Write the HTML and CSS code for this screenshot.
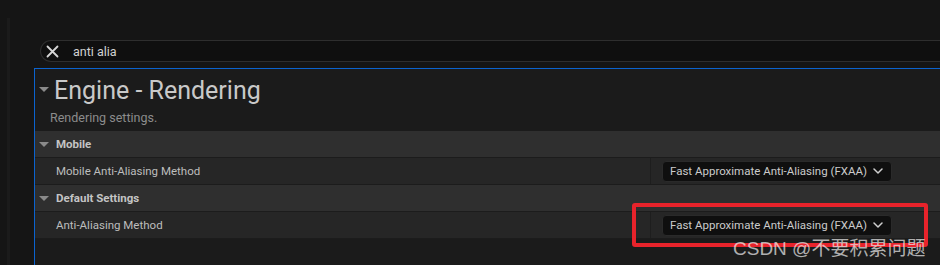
FILE: index.html
```html
<!DOCTYPE html>
<html>
<head>
<meta charset="utf-8">
<link rel="stylesheet" href="styles.css">
</head>
<body>
<div class="app">
  <div class="gutter"></div>
  <div class="main">
    <div class="search">
      <svg class="clear" width="13" height="13" viewBox="0 0 13 13"><path d="M1.5 1.5 L11.5 11.5 M11.5 1.5 L1.5 11.5" stroke="#d6d6d6" stroke-width="1.8" stroke-linecap="round" fill="none"/></svg>
      <span class="query">anti alia</span>
    </div>
    <div class="panel">
      <div class="title-row">
        <span class="tri big"></span>
        <span class="title">Engine - Rendering</span>
      </div>
      <div class="desc">Rendering settings.</div>
      <div class="rows">
        <div class="cat"><span class="tri"></span><span class="cat-name">Mobile</span></div>
        <div class="prop">
          <div class="prop-name">Mobile Anti-Aliasing Method</div>
          <div class="prop-value">
            <div class="combo"><span>Fast Approximate Anti-Aliasing (FXAA)</span>
              <svg width="10" height="6" viewBox="0 0 10 6"><path d="M1 1 L5 5 L9 1" stroke="#cfcfcf" stroke-width="1.5" fill="none" stroke-linecap="round" stroke-linejoin="round"/></svg>
            </div>
          </div>
        </div>
        <div class="cat"><span class="tri"></span><span class="cat-name">Default Settings</span></div>
        <div class="prop">
          <div class="prop-name">Anti-Aliasing Method</div>
          <div class="prop-value">
            <div class="combo"><span>Fast Approximate Anti-Aliasing (FXAA)</span>
              <svg width="10" height="6" viewBox="0 0 10 6"><path d="M1 1 L5 5 L9 1" stroke="#cfcfcf" stroke-width="1.5" fill="none" stroke-linecap="round" stroke-linejoin="round"/></svg>
            </div>
          </div>
        </div>
      </div>
    </div>
  </div>
</div>
<div class="highlight"></div>
<div class="watermark">CSDN @不要积累问题</div>
</body>
</html>
```

FILE: styles.css
```css
html, body {
  margin: 0;
  padding: 0;
  width: 940px;
  height: 265px;
  overflow: hidden;
  background: #151515;
  font-family: Roboto, "Liberation Sans", sans-serif;
}
.app {
  display: flex;
  height: 265px;
  padding-left: 7px;
  position: relative;
}
.gutter {
  width: 3px;
  margin-top: 18px;
  background: #1b1b1b;
  flex: none;
}
.main {
  margin-left: 24px;
  padding-top: 40px;
  flex: 1;
  display: flex;
  flex-direction: column;
  min-width: 0;
}
.search {
  margin-left: 6px;
  height: 20px;
  border: 1px solid #2e2e2e;
  border-right: none;
  border-radius: 11px 0 0 11px;
  background: #0f0f0f;
  display: flex;
  align-items: center;
  padding-left: 5px;
}
.clear { flex: none; }
.query {
  margin-left: 14px;
  font-size: 12.5px;
  color: #d2d2d2;
}
.panel {
  margin-top: 6px;
  flex: 1;
  border-top: 1px solid #0b63cf;
  border-left: 1px solid #0b63cf;
  background: #1b1b1b;
}
.title-row {
  display: flex;
  align-items: center;
  height: 40px;
  padding-left: 4px;
}
.tri {
  width: 0;
  height: 0;
  border-left: 5px solid transparent;
  border-right: 5px solid transparent;
  border-top: 5px solid #8a8a8a;
  flex: none;
}
.title {
  margin-left: 5px;
  font-size: 25px;
  color: #c9c9c9;
  margin-top: 2px;
}
.desc {
  height: 22px;
  padding-left: 15px;
  font-size: 12.5px;
  color: #8c8c8c;
  line-height: 18px;
}
.rows {
  display: flex;
  flex-direction: column;
}
.cat {
  height: 26px;
  background: #2f2f2f;
  display: flex;
  align-items: center;
  padding-left: 4px;
  border-bottom: 1px solid #1c1c1c;
}
.cat-name {
  margin-left: 7px;
  font-size: 11.5px;
  font-weight: bold;
  color: #c4c4c4;
}
.prop {
  height: 26px;
  background: #262626;
  display: flex;
  border-bottom: 1px solid #1c1c1c;
}
.prop-name {
  width: 594px;
  padding-left: 21px;
  display: flex;
  align-items: center;
  font-size: 11.5px;
  color: #bdbdbd;
  flex: none;
  border-right: 1px solid #1e1e1e;
}
.prop-value {
  padding-left: 11px;
  display: flex;
  align-items: center;
}
.combo {
  width: 221px;
  height: 19px;
  background: #0f0f0f;
  border: 1px solid #2a2a2a;
  border-radius: 4px;
  display: flex;
  align-items: center;
  padding-left: 7px;
  font-size: 11.5px;
  color: #cbcbcb;
  gap: 6px;
}
.highlight {
  position: absolute;
  left: 632px;
  top: 203px;
  width: 288px;
  height: 36px;
  border: 4px solid #e8232b;
  border-radius: 3px;
}
.watermark {
  position: absolute;
  left: 733px;
  top: 233px;
  font-family: "Liberation Sans", "Noto Sans CJK SC", sans-serif;
  font-size: 19px;
  color: rgba(235, 235, 235, 0.72);
  white-space: nowrap;
}
```
